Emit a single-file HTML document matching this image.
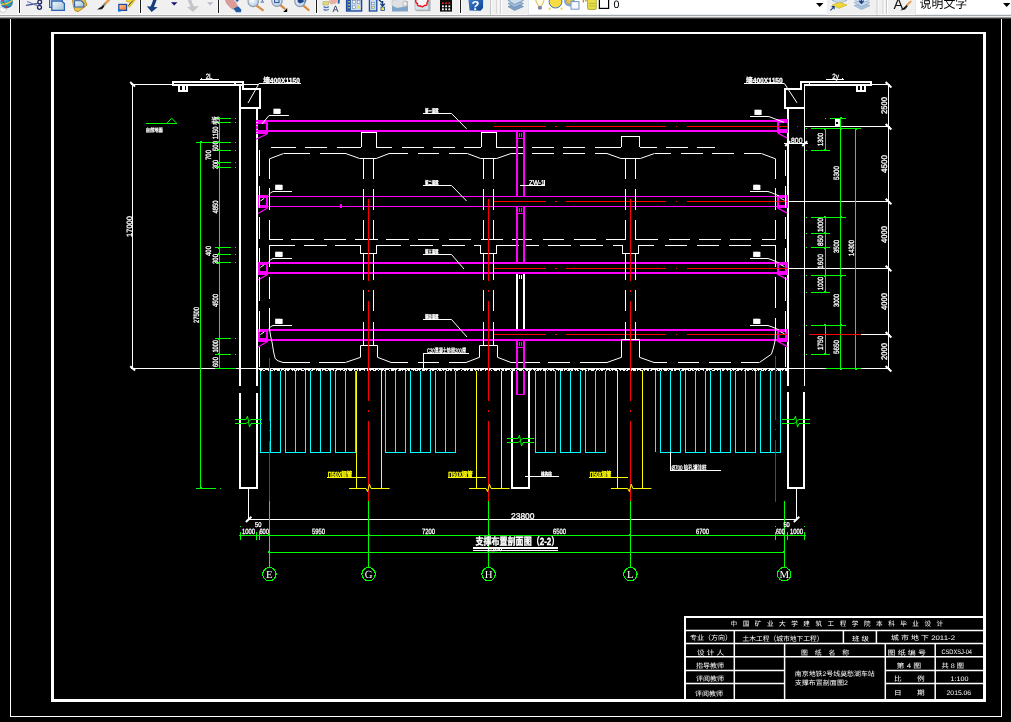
<!DOCTYPE html>
<html lang="zh"><head><meta charset="utf-8"><title>支撑布置剖面图（2-2）</title>
<style>
html,body{margin:0;padding:0;background:#000;overflow:hidden}
body{width:1011px;height:722px;position:relative;font-family:"Liberation Sans","Noto Sans CJK SC",sans-serif}
svg{position:absolute;left:0;top:0;display:block;will-change:transform}
</style></head><body>
<svg width="1011" height="722" viewBox="0 0 1011 722" shape-rendering="crispEdges" text-rendering="geometricPrecision">
<rect x="0" y="0" width="1011" height="722" fill="#000"/>
<line x1="10.5" y1="18" x2="10.5" y2="717" stroke="#fff" stroke-width="1"/>
<line x1="1001.5" y1="18" x2="1001.5" y2="717" stroke="#fff" stroke-width="1"/>
<line x1="10" y1="716.5" x2="1002" y2="716.5" stroke="#fff" stroke-width="1"/>
<rect x="51" y="32" width="3" height="670" fill="#fff"/>
<rect x="983" y="32" width="3" height="670" fill="#fff"/>
<rect x="51" y="32" width="935" height="2" fill="#fff"/>
<rect x="51" y="699" width="935" height="3" fill="#fff"/>
<line x1="685" y1="630.5" x2="984" y2="630.5" stroke="#fff" stroke-width="1.5" shape-rendering="geometricPrecision"/>
<line x1="685" y1="643.5" x2="984" y2="643.5" stroke="#fff" stroke-width="1.5" shape-rendering="geometricPrecision"/>
<line x1="685" y1="656.7" x2="984" y2="656.7" stroke="#fff" stroke-width="1.5" shape-rendering="geometricPrecision"/>
<line x1="685" y1="670.5" x2="784.6" y2="670.5" stroke="#fff" stroke-width="1.5" shape-rendering="geometricPrecision"/>
<line x1="885.3" y1="670.5" x2="984" y2="670.5" stroke="#fff" stroke-width="1.5" shape-rendering="geometricPrecision"/>
<line x1="685" y1="683.5" x2="784.6" y2="683.5" stroke="#fff" stroke-width="1.5" shape-rendering="geometricPrecision"/>
<line x1="885.3" y1="683.5" x2="984" y2="683.5" stroke="#fff" stroke-width="1.5" shape-rendering="geometricPrecision"/>
<line x1="734.3" y1="630.5" x2="734.3" y2="700" stroke="#fff" stroke-width="1.5" shape-rendering="geometricPrecision"/>
<line x1="784.6" y1="643.5" x2="784.6" y2="700" stroke="#fff" stroke-width="1.5" shape-rendering="geometricPrecision"/>
<line x1="843.4" y1="630.5" x2="843.4" y2="643.5" stroke="#fff" stroke-width="1.5" shape-rendering="geometricPrecision"/>
<line x1="876.4" y1="630.5" x2="876.4" y2="643.5" stroke="#fff" stroke-width="1.5" shape-rendering="geometricPrecision"/>
<line x1="885.3" y1="643.5" x2="885.3" y2="700" stroke="#fff" stroke-width="1.5" shape-rendering="geometricPrecision"/>
<line x1="935.2" y1="643.5" x2="935.2" y2="700" stroke="#fff" stroke-width="1.5" shape-rendering="geometricPrecision"/>
<rect x="684" y="616" width="300" height="2" fill="#fff"/>
<rect x="684" y="616" width="2" height="84" fill="#fff"/>
<g font-family="'Liberation Sans','Noto Sans CJK SC',sans-serif">
<text x="730.6" y="626.2" font-size="6.6" fill="#fff" textLength="212.6" lengthAdjust="spacing">中国矿业大学建筑工程学院本科毕业设计</text>
<text x="690" y="639.8" font-size="6.6" fill="#fff" textLength="42" lengthAdjust="spacingAndGlyphs">专业（方向）</text>
<text x="742.5" y="641.1" font-size="6.6" fill="#fff" textLength="81" lengthAdjust="spacingAndGlyphs">土木工程（城市地下工程）</text>
<text x="852" y="641.2" font-size="6.6" fill="#fff" textLength="17" lengthAdjust="spacingAndGlyphs">班 级</text>
<text x="891" y="639.8" font-size="6.6" fill="#fff" textLength="64" lengthAdjust="spacingAndGlyphs">城 市 地 下 2011-2</text>
<text x="697" y="654.5" font-size="6.6" fill="#fff" textLength="27" lengthAdjust="spacingAndGlyphs">设 计 人</text>
<text x="801" y="655.1" font-size="6.6" fill="#fff" textLength="48" lengthAdjust="spacingAndGlyphs">图　纸　名　称</text>
<text x="887.5" y="654.6" font-size="6.6" fill="#fff" textLength="38.5" lengthAdjust="spacingAndGlyphs">图 纸 编 号</text>
<text x="941.5" y="654.2" font-size="6.6" fill="#fff" textLength="30.5" lengthAdjust="spacingAndGlyphs">CSDXSJ-04</text>
<text x="696" y="668" font-size="6.6" fill="#fff" textLength="28" lengthAdjust="spacingAndGlyphs">指导教师</text>
<text x="896.6" y="668.2" font-size="6.6" fill="#fff" textLength="24.5" lengthAdjust="spacingAndGlyphs">第 4 图</text>
<text x="941.5" y="668.2" font-size="6.6" fill="#fff" textLength="22.5" lengthAdjust="spacingAndGlyphs">共 8 图</text>
<text x="696" y="681.2" font-size="6.6" fill="#fff" textLength="28" lengthAdjust="spacingAndGlyphs">评阅教师</text>
<text x="894" y="681.2" font-size="6.6" fill="#fff" textLength="30.6" lengthAdjust="spacingAndGlyphs">比　　例</text>
<text x="950.6" y="681.2" font-size="6.6" fill="#fff" textLength="18" lengthAdjust="spacingAndGlyphs">1:100</text>
<text x="695" y="696" font-size="6.6" fill="#fff" textLength="28" lengthAdjust="spacingAndGlyphs">评阅教师</text>
<text x="894" y="695.2" font-size="6.6" fill="#fff" textLength="30.6" lengthAdjust="spacingAndGlyphs">日　　期</text>
<text x="946.6" y="695.2" font-size="6.6" fill="#fff" textLength="24.5" lengthAdjust="spacingAndGlyphs">2015.06</text>
<text x="794.8" y="676.2" font-size="6.6" fill="#fff" textLength="80" lengthAdjust="spacingAndGlyphs">南京地铁2号线莫愁湖车站</text>
<text x="794.8" y="685.4" font-size="6.6" fill="#fff" textLength="53" lengthAdjust="spacingAndGlyphs">支撑布置剖面图2</text>
</g>
<g font-family="'Liberation Sans','Noto Sans CJK SC',sans-serif" class="dw">
<line x1="131" y1="84.4" x2="172.5" y2="84.4" stroke="#fff" stroke-width="1"/>
<line x1="132.7" y1="84" x2="132.7" y2="368.7" stroke="#fff" stroke-width="1"/>
<path d="M130.2 82 L135 86.6" stroke="#fff" stroke-width="2" fill="none" shape-rendering="geometricPrecision"/>
<path d="M130.2 366.3 L135.1 370.6" stroke="#fff" stroke-width="2" fill="none" shape-rendering="geometricPrecision"/>
<line x1="131" y1="368.7" x2="260" y2="368.7" stroke="#fff" stroke-width="1"/>
<rect x="172" y="81" width="72" height="2" fill="#fff"/>
<rect x="172" y="84" width="70" height="2" fill="#fff"/>
<rect x="172" y="81" width="1.6" height="5" fill="#fff"/>
<rect x="242" y="81" width="2" height="9" fill="#fff"/>
<rect x="234.2" y="83" width="1.6" height="1" fill="#fff"/>
<rect x="178.2" y="86" width="1.8" height="5.6" fill="#fff"/>
<rect x="182.4" y="86" width="2.2" height="4.6" fill="#fff"/>
<rect x="186" y="86" width="1.9" height="5.6" fill="#fff"/>
<rect x="178.2" y="90.2" width="9.7" height="1.5" fill="#fff"/>
<text x="205.8" y="78.9" font-size="7.6" fill="#fff" textLength="6.6" lengthAdjust="spacingAndGlyphs" stroke="#fff" stroke-width="0.3">2L</text>
<rect x="201.4" y="78" width="1" height="1" fill="#fff"/>
<line x1="200.3" y1="79.6" x2="219" y2="79.6" stroke="#fff" stroke-width="1"/>
<rect x="242" y="88" width="19" height="2" fill="#fff"/>
<rect x="259" y="88" width="2" height="21" fill="#fff"/>
<rect x="239" y="107" width="22" height="2" fill="#fff"/>
<line x1="244" y1="84.5" x2="258" y2="84.5" stroke="#fff" stroke-width="1"/>
<path d="M248 103 L259 83.5 L301 83.5" stroke="#fff" stroke-width="1" fill="none" shape-rendering="geometricPrecision"/>
<text x="263.2" y="82.7" font-size="7.4" fill="#fff" textLength="36.8" lengthAdjust="spacingAndGlyphs" font-weight="bold" stroke="#fff" stroke-width="0.3">墙400X1150</text>
<rect x="239" y="85.8" width="2" height="299.7" fill="#fff"/>
<rect x="256" y="107" width="2" height="278.5" fill="#fff"/>
<rect x="239" y="393" width="2" height="96" fill="#fff"/>
<rect x="256" y="393" width="2" height="96" fill="#fff"/>
<rect x="239" y="487.4" width="19" height="2" fill="#fff"/>
<line x1="248.6" y1="489" x2="248.6" y2="519.4" stroke="#fff" stroke-width="1"/>
<line x1="248" y1="519.4" x2="797" y2="519.4" stroke="#fff" stroke-width="1"/>
<path d="M245.9 522 L251.4 516.8" stroke="#fff" stroke-width="2" fill="none" shape-rendering="geometricPrecision"/>
<path d="M793.8 522 L799.3 516.8" stroke="#fff" stroke-width="2" fill="none" shape-rendering="geometricPrecision"/>
<line x1="796.5" y1="489" x2="796.5" y2="519.4" stroke="#fff" stroke-width="1"/>
<text x="511" y="519.3" font-size="8.4" fill="#fff" textLength="23.5" lengthAdjust="spacingAndGlyphs" stroke="#fff" stroke-width="0.3">23800</text>
<rect x="787" y="107" width="2" height="278.5" fill="#fff"/>
<rect x="803.9" y="84" width="1.4" height="301.5" fill="#fff"/>
<rect x="787" y="391.5" width="2" height="97.5" fill="#fff"/>
<rect x="803.4" y="391.5" width="2" height="97.5" fill="#fff"/>
<rect x="787" y="487.4" width="18.4" height="2" fill="#fff"/>
<rect x="800" y="81" width="72" height="2" fill="#fff"/>
<rect x="803.9" y="84" width="68.1" height="2" fill="#fff"/>
<rect x="800" y="81" width="2" height="9" fill="#fff"/>
<rect x="870.4" y="81" width="1.6" height="5" fill="#fff"/>
<rect x="808.9" y="83" width="1.4" height="1" fill="#fff"/>
<rect x="784" y="88" width="18" height="2" fill="#fff"/>
<rect x="784" y="88" width="2" height="21" fill="#fff"/>
<rect x="784" y="107" width="21" height="2" fill="#fff"/>
<line x1="871.9" y1="84.8" x2="890" y2="84.8" stroke="#fff" stroke-width="1"/>
<rect x="856.3" y="86" width="1.9" height="5.6" fill="#fff"/>
<rect x="859.6" y="86" width="2.2" height="4.6" fill="#fff"/>
<rect x="863.9" y="86" width="1.9" height="5.6" fill="#fff"/>
<rect x="856.3" y="90.2" width="9.5" height="1.5" fill="#fff"/>
<text x="832.2" y="78.9" font-size="7.6" fill="#fff" textLength="6.6" lengthAdjust="spacingAndGlyphs" stroke="#fff" stroke-width="0.3">2y</text>
<rect x="842.4" y="78" width="1" height="1" fill="#fff"/>
<line x1="826.2" y1="79.6" x2="844.4" y2="79.6" stroke="#fff" stroke-width="1"/>
<path d="M744 83.5 L784.4 83.5 L797 102.8" stroke="#fff" stroke-width="1" fill="none" shape-rendering="geometricPrecision"/>
<text x="746" y="82.7" font-size="7.4" fill="#fff" textLength="36.8" lengthAdjust="spacingAndGlyphs" font-weight="bold" stroke="#fff" stroke-width="0.3">墙400X1150</text>
<line x1="888.7" y1="84" x2="888.7" y2="368.7" stroke="#fff" stroke-width="1"/>
<line x1="804.6" y1="126.7" x2="889.5" y2="126.7" stroke="#fff" stroke-width="1"/>
<path d="M885.6 123.9 L891.4 129.4" stroke="#fff" stroke-width="2" fill="none" shape-rendering="geometricPrecision"/>
<line x1="804.6" y1="201.5" x2="889.5" y2="201.5" stroke="#fff" stroke-width="1"/>
<path d="M885.6 198.7 L891.4 204.2" stroke="#fff" stroke-width="2" fill="none" shape-rendering="geometricPrecision"/>
<line x1="804.6" y1="268.6" x2="889.5" y2="268.6" stroke="#fff" stroke-width="1"/>
<path d="M885.6 265.8 L891.4 271.3" stroke="#fff" stroke-width="2" fill="none" shape-rendering="geometricPrecision"/>
<line x1="861" y1="334.8" x2="889.5" y2="334.8" stroke="#fff" stroke-width="1"/>
<path d="M885.6 332 L891.4 337.5" stroke="#fff" stroke-width="2" fill="none" shape-rendering="geometricPrecision"/>
<line x1="788" y1="201.5" x2="804.6" y2="201.5" stroke="#fff" stroke-width="1"/>
<line x1="788" y1="268.6" x2="804.6" y2="268.6" stroke="#fff" stroke-width="1"/>
<path d="M885.6 82 L891.4 87.5" stroke="#fff" stroke-width="2" fill="none" shape-rendering="geometricPrecision"/>
<path d="M885.6 365.9 L891.4 371.4" stroke="#fff" stroke-width="2" fill="none" shape-rendering="geometricPrecision"/>
<line x1="788" y1="368.7" x2="826" y2="368.7" stroke="#fff" stroke-width="1"/>
<line x1="861" y1="368.7" x2="889.5" y2="368.7" stroke="#fff" stroke-width="1"/>
<line x1="826" y1="368.7" x2="861" y2="368.7" stroke="#0f0" stroke-width="1"/>
<line x1="784" y1="143.6" x2="808" y2="143.6" stroke="#fff" stroke-width="1"/>
<path d="M785.2 146 L790.2 141.2" stroke="#fff" stroke-width="2" fill="none" shape-rendering="geometricPrecision"/>
<path d="M802.2 146 L807.2 141.2" stroke="#fff" stroke-width="2" fill="none" shape-rendering="geometricPrecision"/>
<text x="791" y="143" font-size="7.6" fill="#fff" textLength="11.5" lengthAdjust="spacingAndGlyphs" stroke="#fff" stroke-width="0.3">800</text>
<text x="887.3" y="114" font-size="8" fill="#fff" transform="rotate(-90 887.3 114)" textLength="17" lengthAdjust="spacingAndGlyphs" stroke="#fff" stroke-width="0.3">2500</text>
<text x="887.3" y="173" font-size="8" fill="#fff" transform="rotate(-90 887.3 173)" textLength="18" lengthAdjust="spacingAndGlyphs" stroke="#fff" stroke-width="0.3">4500</text>
<text x="887.3" y="243" font-size="8" fill="#fff" transform="rotate(-90 887.3 243)" textLength="17" lengthAdjust="spacingAndGlyphs" stroke="#fff" stroke-width="0.3">4000</text>
<text x="887.3" y="310" font-size="8" fill="#fff" transform="rotate(-90 887.3 310)" textLength="17" lengthAdjust="spacingAndGlyphs" stroke="#fff" stroke-width="0.3">4000</text>
<text x="887.3" y="360" font-size="8" fill="#fff" transform="rotate(-90 887.3 360)" textLength="17" lengthAdjust="spacingAndGlyphs" stroke="#fff" stroke-width="0.3">2000</text>
<line x1="840.5" y1="118.4" x2="840.5" y2="368.7" stroke="#0f0" stroke-width="1"/>
<line x1="855.7" y1="128.6" x2="855.7" y2="368.7" stroke="#0f0" stroke-width="1"/>
<line x1="830" y1="118.4" x2="846" y2="118.4" stroke="#0f0" stroke-width="1"/>
<line x1="811" y1="128.6" x2="861" y2="128.6" stroke="#0f0" stroke-width="1"/>
<line x1="825.4" y1="128.6" x2="825.4" y2="150.4" stroke="#0f0" stroke-width="1"/>
<line x1="811" y1="150.4" x2="830" y2="150.4" stroke="#0f0" stroke-width="1"/>
<line x1="825.4" y1="217.4" x2="825.4" y2="292.4" stroke="#0f0" stroke-width="1"/>
<line x1="825.4" y1="325.4" x2="825.4" y2="354.4" stroke="#0f0" stroke-width="1"/>
<line x1="811" y1="217.4" x2="846" y2="217.4" stroke="#0f0" stroke-width="1"/>
<line x1="811" y1="233.4" x2="830" y2="233.4" stroke="#0f0" stroke-width="1"/>
<line x1="811" y1="247.5" x2="830" y2="247.5" stroke="#0f0" stroke-width="1"/>
<line x1="811" y1="275.6" x2="846" y2="275.6" stroke="#0f0" stroke-width="1"/>
<line x1="811" y1="292.4" x2="830" y2="292.4" stroke="#0f0" stroke-width="1"/>
<line x1="811" y1="325.4" x2="846" y2="325.4" stroke="#0f0" stroke-width="1"/>
<line x1="811" y1="354.4" x2="830" y2="354.4" stroke="#0f0" stroke-width="1"/>
<rect x="806" y="128.1" width="1" height="1" fill="#0f0"/>
<rect x="806" y="149.9" width="1" height="1" fill="#0f0"/>
<rect x="806" y="216.9" width="1" height="1" fill="#0f0"/>
<rect x="806" y="232.9" width="1" height="1" fill="#0f0"/>
<rect x="806" y="247" width="1" height="1" fill="#0f0"/>
<rect x="806" y="275.1" width="1" height="1" fill="#0f0"/>
<rect x="806" y="291.9" width="1" height="1" fill="#0f0"/>
<rect x="806" y="324.9" width="1" height="1" fill="#0f0"/>
<rect x="806" y="353.9" width="1" height="1" fill="#0f0"/>
<rect x="825" y="118" width="1" height="1" fill="#0f0"/>
<rect x="824.4" y="127.6" width="2" height="2" fill="#0f0"/>
<rect x="824.4" y="149.4" width="2" height="2" fill="#0f0"/>
<rect x="839.5" y="127.6" width="2" height="2" fill="#0f0"/>
<rect x="854.7" y="127.6" width="2" height="2" fill="#0f0"/>
<rect x="824.4" y="216.4" width="2" height="2" fill="#0f0"/>
<rect x="839.5" y="216.4" width="2" height="2" fill="#0f0"/>
<rect x="824.4" y="232.4" width="2" height="2" fill="#0f0"/>
<rect x="824.4" y="246.5" width="2" height="2" fill="#0f0"/>
<rect x="824.4" y="274.6" width="2" height="2" fill="#0f0"/>
<rect x="839.5" y="274.6" width="2" height="2" fill="#0f0"/>
<rect x="824.4" y="291.4" width="2" height="2" fill="#0f0"/>
<rect x="824.4" y="324.4" width="2" height="2" fill="#0f0"/>
<rect x="839.5" y="324.4" width="2" height="2" fill="#0f0"/>
<rect x="824.4" y="353.4" width="2" height="2" fill="#0f0"/>
<rect x="839.5" y="367.7" width="2" height="2" fill="#0f0"/>
<rect x="854.7" y="367.7" width="2" height="2" fill="#0f0"/>
<rect x="839.5" y="117.4" width="2" height="2" fill="#0f0"/>
<line x1="809" y1="334.8" x2="861" y2="334.8" stroke="#f00" stroke-width="1"/>
<rect x="798.5" y="334.7" width="1.2" height="1" fill="#f00"/>
<rect x="796.5" y="126" width="1.2" height="1" fill="#f00"/>
<rect x="834.5" y="119.3" width="5" height="6.6" fill="#fff"/>
<rect x="836" y="121.5" width="2" height="2.5" fill="#000"/>
<text x="823" y="146" font-size="7.6" fill="#fff" transform="rotate(-90 823 146)" textLength="13" lengthAdjust="spacingAndGlyphs" stroke="#fff" stroke-width="0.3">1300</text>
<text x="839" y="180" font-size="7.6" fill="#fff" transform="rotate(-90 839 180)" textLength="14" lengthAdjust="spacingAndGlyphs" stroke="#fff" stroke-width="0.3">5300</text>
<text x="823" y="232" font-size="7.6" fill="#fff" transform="rotate(-90 823 232)" textLength="14" lengthAdjust="spacingAndGlyphs" stroke="#fff" stroke-width="0.3">1000</text>
<text x="823" y="246" font-size="7.6" fill="#fff" transform="rotate(-90 823 246)" textLength="11" lengthAdjust="spacingAndGlyphs" stroke="#fff" stroke-width="0.3">850</text>
<text x="823" y="269" font-size="7.6" fill="#fff" transform="rotate(-90 823 269)" textLength="15" lengthAdjust="spacingAndGlyphs" stroke="#fff" stroke-width="0.3">1600</text>
<text x="823" y="290" font-size="7.6" fill="#fff" transform="rotate(-90 823 290)" textLength="13" lengthAdjust="spacingAndGlyphs" stroke="#fff" stroke-width="0.3">1000</text>
<text x="839" y="253" font-size="7.6" fill="#fff" transform="rotate(-90 839 253)" textLength="13" lengthAdjust="spacingAndGlyphs" stroke="#fff" stroke-width="0.3">3500</text>
<text x="854" y="256" font-size="7.6" fill="#fff" transform="rotate(-90 854 256)" textLength="16" lengthAdjust="spacingAndGlyphs" stroke="#fff" stroke-width="0.3">14300</text>
<text x="839" y="307" font-size="7.6" fill="#fff" transform="rotate(-90 839 307)" textLength="13" lengthAdjust="spacingAndGlyphs" stroke="#fff" stroke-width="0.3">3000</text>
<text x="823" y="350" font-size="7.6" fill="#fff" transform="rotate(-90 823 350)" textLength="14" lengthAdjust="spacingAndGlyphs" stroke="#fff" stroke-width="0.3">1750</text>
<text x="839" y="354" font-size="7.6" fill="#fff" transform="rotate(-90 839 354)" textLength="14" lengthAdjust="spacingAndGlyphs" stroke="#fff" stroke-width="0.3">5650</text>
<line x1="219.5" y1="118.4" x2="219.5" y2="368.7" stroke="#0f0" stroke-width="1"/>
<line x1="200.5" y1="142.1" x2="200.5" y2="488.4" stroke="#0f0" stroke-width="1"/>
<line x1="196" y1="142.1" x2="231" y2="142.1" stroke="#0f0" stroke-width="1"/>
<line x1="215" y1="118.4" x2="231" y2="118.4" stroke="#0f0" stroke-width="1"/>
<line x1="215" y1="122.7" x2="231" y2="122.7" stroke="#0f0" stroke-width="1"/>
<line x1="215" y1="150.4" x2="231" y2="150.4" stroke="#0f0" stroke-width="1"/>
<line x1="215" y1="162.5" x2="231" y2="162.5" stroke="#0f0" stroke-width="1"/>
<line x1="215" y1="167.4" x2="231" y2="167.4" stroke="#0f0" stroke-width="1"/>
<line x1="215" y1="247.5" x2="231" y2="247.5" stroke="#0f0" stroke-width="1"/>
<line x1="215" y1="254.4" x2="231" y2="254.4" stroke="#0f0" stroke-width="1"/>
<line x1="215" y1="262.5" x2="231" y2="262.5" stroke="#0f0" stroke-width="1"/>
<line x1="215" y1="338.5" x2="231" y2="338.5" stroke="#0f0" stroke-width="1"/>
<line x1="215" y1="354.4" x2="231" y2="354.4" stroke="#0f0" stroke-width="1"/>
<line x1="215" y1="368.7" x2="236" y2="368.7" stroke="#0f0" stroke-width="1"/>
<rect x="235" y="117.9" width="1" height="1" fill="#0f0"/>
<rect x="217.8" y="117.4" width="2" height="2" fill="#0f0"/>
<rect x="235" y="122.2" width="1" height="1" fill="#0f0"/>
<rect x="217.8" y="121.7" width="2" height="2" fill="#0f0"/>
<rect x="235" y="141.6" width="1" height="1" fill="#0f0"/>
<rect x="217.8" y="141.1" width="2" height="2" fill="#0f0"/>
<rect x="235" y="149.9" width="1" height="1" fill="#0f0"/>
<rect x="217.8" y="149.4" width="2" height="2" fill="#0f0"/>
<rect x="235" y="162" width="1" height="1" fill="#0f0"/>
<rect x="217.8" y="161.5" width="2" height="2" fill="#0f0"/>
<rect x="235" y="166.9" width="1" height="1" fill="#0f0"/>
<rect x="217.8" y="166.4" width="2" height="2" fill="#0f0"/>
<rect x="235" y="247" width="1" height="1" fill="#0f0"/>
<rect x="217.8" y="246.5" width="2" height="2" fill="#0f0"/>
<rect x="235" y="253.9" width="1" height="1" fill="#0f0"/>
<rect x="217.8" y="253.4" width="2" height="2" fill="#0f0"/>
<rect x="235" y="262" width="1" height="1" fill="#0f0"/>
<rect x="217.8" y="261.5" width="2" height="2" fill="#0f0"/>
<rect x="235" y="338" width="1" height="1" fill="#0f0"/>
<rect x="217.8" y="337.5" width="2" height="2" fill="#0f0"/>
<rect x="235" y="353.9" width="1" height="1" fill="#0f0"/>
<rect x="217.8" y="353.4" width="2" height="2" fill="#0f0"/>
<rect x="199.5" y="141.1" width="2" height="2" fill="#0f0"/>
<line x1="196" y1="488.4" x2="216" y2="488.4" stroke="#0f0" stroke-width="1"/>
<rect x="199.5" y="487.4" width="2" height="2" fill="#0f0"/>
<rect x="220" y="487.9" width="1" height="1" fill="#0f0"/>
<text x="217.8" y="124.4" font-size="7.6" fill="#fff" transform="rotate(-90 217.8 124.4)" textLength="8" lengthAdjust="spacingAndGlyphs" stroke="#fff" stroke-width="0.3">楼板</text>
<text x="217.8" y="139.2" font-size="7.6" fill="#fff" transform="rotate(-90 217.8 139.2)" textLength="12.9" lengthAdjust="spacingAndGlyphs" stroke="#fff" stroke-width="0.3">1150</text>
<text x="217.8" y="151" font-size="7.6" fill="#fff" transform="rotate(-90 217.8 151)" textLength="10" lengthAdjust="spacingAndGlyphs" stroke="#fff" stroke-width="0.3">500</text>
<text x="211" y="160" font-size="7.6" fill="#fff" transform="rotate(-90 211 160)" textLength="10" lengthAdjust="spacingAndGlyphs" stroke="#fff" stroke-width="0.3">700</text>
<text x="217.8" y="169" font-size="7.6" fill="#fff" transform="rotate(-90 217.8 169)" textLength="9" lengthAdjust="spacingAndGlyphs" stroke="#fff" stroke-width="0.3">300</text>
<text x="217.8" y="213.6" font-size="7.6" fill="#fff" transform="rotate(-90 217.8 213.6)" textLength="13.1" lengthAdjust="spacingAndGlyphs" stroke="#fff" stroke-width="0.3">4850</text>
<text x="211" y="256" font-size="7.6" fill="#fff" transform="rotate(-90 211 256)" textLength="10" lengthAdjust="spacingAndGlyphs" stroke="#fff" stroke-width="0.3">400</text>
<text x="217.8" y="264" font-size="7.6" fill="#fff" transform="rotate(-90 217.8 264)" textLength="10" lengthAdjust="spacingAndGlyphs" stroke="#fff" stroke-width="0.3">300</text>
<text x="217.8" y="307" font-size="7.6" fill="#fff" transform="rotate(-90 217.8 307)" textLength="13" lengthAdjust="spacingAndGlyphs" stroke="#fff" stroke-width="0.3">4500</text>
<text x="217.8" y="352.5" font-size="7.6" fill="#fff" transform="rotate(-90 217.8 352.5)" textLength="12.5" lengthAdjust="spacingAndGlyphs" stroke="#fff" stroke-width="0.3">1000</text>
<text x="217.8" y="367" font-size="7.6" fill="#fff" transform="rotate(-90 217.8 367)" textLength="10" lengthAdjust="spacingAndGlyphs" stroke="#fff" stroke-width="0.3">600</text>
<text x="199" y="323" font-size="7.6" fill="#fff" transform="rotate(-90 199 323)" textLength="16" lengthAdjust="spacingAndGlyphs" stroke="#fff" stroke-width="0.3">27500</text>
<text x="132" y="237" font-size="7.6" fill="#fff" transform="rotate(-90 132 237)" textLength="21" lengthAdjust="spacingAndGlyphs" stroke="#fff" stroke-width="0.3">17000</text>
<line x1="146" y1="123.3" x2="177" y2="123.3" stroke="#0f0" stroke-width="1"/>
<path d="M166.9 123.3 L171.6 118.2 L176.8 123.3" stroke="#0f0" stroke-width="1" fill="none" shape-rendering="geometricPrecision"/>
<text x="145.7" y="131.6" font-size="5.4" fill="#fff" textLength="17" lengthAdjust="spacingAndGlyphs" stroke="#fff" stroke-width="0.3">自然地面</text>
<line x1="258" y1="121" x2="787" y2="121" stroke="#f0f" stroke-width="2.2"/>
<line x1="258" y1="131" x2="787" y2="131" stroke="#f0f" stroke-width="2.2"/>
<line x1="258" y1="196.6" x2="787" y2="196.6" stroke="#f0f" stroke-width="1.1"/>
<line x1="258" y1="206.5" x2="787" y2="206.5" stroke="#f0f" stroke-width="1.1"/>
<line x1="258" y1="263" x2="787" y2="263" stroke="#f0f" stroke-width="2.2"/>
<line x1="258" y1="272.9" x2="787" y2="272.9" stroke="#f0f" stroke-width="2.2"/>
<line x1="258" y1="330.2" x2="787" y2="330.2" stroke="#f0f" stroke-width="2.2"/>
<line x1="258" y1="339.9" x2="787" y2="339.9" stroke="#f0f" stroke-width="2.2"/>
<rect x="256" y="119.9" width="12" height="14.1" fill="#f0f"/>
<rect x="258.2" y="123.8" width="7.3" height="5.9" fill="#000"/>
<path d="M267.5 133.7 L256 139.2" stroke="#f0f" stroke-width="1.2" fill="none" shape-rendering="geometricPrecision"/>
<rect x="256.3" y="121.6" width="1.2" height="1" fill="#fbf"/>
<rect x="256.3" y="125.2" width="1.2" height="1" fill="#fbf"/>
<rect x="256.3" y="128.8" width="1.2" height="1" fill="#fbf"/>
<rect x="256.3" y="132.2" width="1.2" height="1" fill="#fbf"/>
<rect x="777.1" y="119.1" width="10.7" height="14.3" fill="#f0f"/>
<rect x="779" y="122.9" width="7.9" height="6.2" fill="#000"/>
<path d="M777.9 133.1 L787.4 138.2" stroke="#f0f" stroke-width="1.2" fill="none" shape-rendering="geometricPrecision"/>
<rect x="258" y="195" width="10" height="13.4" fill="#f0f"/>
<rect x="260" y="198.2" width="5.5" height="6.3" fill="#000"/>
<path d="M267.5 208.1 L258 213.6" stroke="#f0f" stroke-width="1.2" fill="none" shape-rendering="geometricPrecision"/>
<rect x="777.1" y="195" width="10.7" height="13.4" fill="#f0f"/>
<rect x="779" y="198.2" width="6.2" height="6.3" fill="#000"/>
<path d="M777.9 208.1 L787.4 213.2" stroke="#f0f" stroke-width="1.2" fill="none" shape-rendering="geometricPrecision"/>
<rect x="258" y="261.9" width="10" height="12.9" fill="#f0f"/>
<rect x="260" y="264.6" width="5.5" height="6.3" fill="#000"/>
<path d="M267.5 274.5 L258 280" stroke="#f0f" stroke-width="1.2" fill="none" shape-rendering="geometricPrecision"/>
<rect x="777.1" y="261.9" width="10.7" height="12.9" fill="#f0f"/>
<rect x="779" y="264.6" width="6.2" height="6.3" fill="#000"/>
<path d="M777.9 274.5 L787.4 279.6" stroke="#f0f" stroke-width="1.2" fill="none" shape-rendering="geometricPrecision"/>
<rect x="258" y="329.1" width="10" height="12.7" fill="#f0f"/>
<rect x="260" y="331.8" width="5.5" height="6.1" fill="#000"/>
<path d="M267.5 341.5 L258 347" stroke="#f0f" stroke-width="1.2" fill="none" shape-rendering="geometricPrecision"/>
<rect x="777.1" y="329.1" width="10.7" height="12.7" fill="#f0f"/>
<rect x="779" y="331.8" width="6.2" height="6.1" fill="#000"/>
<path d="M777.9 341.5 L787.4 346.6" stroke="#f0f" stroke-width="1.2" fill="none" shape-rendering="geometricPrecision"/>
<line x1="493.5" y1="126.4" x2="787" y2="126.4" stroke="#f00" stroke-width="1.1" stroke-dasharray="52 9.5 1.6 9.5 100 9.5 1.6 9.5 200"/>
<line x1="493.5" y1="201.5" x2="787" y2="201.5" stroke="#f00" stroke-width="1.1" stroke-dasharray="52 9.5 1.6 9.5 100 9.5 1.6 9.5 200"/>
<line x1="493.5" y1="268.6" x2="787" y2="268.6" stroke="#f00" stroke-width="1.1" stroke-dasharray="52 9.5 1.6 9.5 100 9.5 1.6 9.5 200"/>
<line x1="493.5" y1="334.6" x2="787" y2="334.6" stroke="#f00" stroke-width="1.1" stroke-dasharray="52 9.5 1.6 9.5 100 9.5 1.6 9.5 200"/>
<line x1="259.6" y1="149.8" x2="259.6" y2="176" stroke="#fff" stroke-width="1"/>
<line x1="259.6" y1="186" x2="259.6" y2="208" stroke="#fff" stroke-width="1"/>
<line x1="259.6" y1="216.7" x2="259.6" y2="239" stroke="#fff" stroke-width="1"/>
<line x1="259.6" y1="247.7" x2="259.6" y2="262" stroke="#fff" stroke-width="1"/>
<line x1="259.6" y1="276.5" x2="259.6" y2="301.2" stroke="#fff" stroke-width="1"/>
<line x1="259.6" y1="310.8" x2="259.6" y2="332" stroke="#fff" stroke-width="1"/>
<line x1="259.6" y1="347.4" x2="259.6" y2="366.5" stroke="#fff" stroke-width="1"/>
<line x1="785.9" y1="149.8" x2="785.9" y2="176" stroke="#fff" stroke-width="1"/>
<line x1="785.9" y1="186" x2="785.9" y2="208" stroke="#fff" stroke-width="1"/>
<line x1="785.9" y1="216.7" x2="785.9" y2="239" stroke="#fff" stroke-width="1"/>
<line x1="785.9" y1="247.7" x2="785.9" y2="262" stroke="#fff" stroke-width="1"/>
<line x1="785.9" y1="276.5" x2="785.9" y2="301.2" stroke="#fff" stroke-width="1"/>
<line x1="785.9" y1="310.8" x2="785.9" y2="332" stroke="#fff" stroke-width="1"/>
<line x1="785.9" y1="347.4" x2="785.9" y2="366.5" stroke="#fff" stroke-width="1"/>
<line x1="271" y1="147.4" x2="295.7" y2="147.4" stroke="#fff" stroke-width="1"/>
<line x1="305" y1="147.4" x2="326.8" y2="147.4" stroke="#fff" stroke-width="1"/>
<line x1="336.8" y1="147.4" x2="361" y2="147.4" stroke="#fff" stroke-width="1"/>
<line x1="376.2" y1="147.4" x2="391.6" y2="147.4" stroke="#fff" stroke-width="1"/>
<line x1="402" y1="147.4" x2="424" y2="147.4" stroke="#fff" stroke-width="1"/>
<line x1="433.2" y1="147.4" x2="455.2" y2="147.4" stroke="#fff" stroke-width="1"/>
<line x1="464.4" y1="147.4" x2="481" y2="147.4" stroke="#fff" stroke-width="1"/>
<line x1="496.2" y1="147.4" x2="523" y2="147.4" stroke="#fff" stroke-width="1"/>
<line x1="532.3" y1="147.4" x2="554" y2="147.4" stroke="#fff" stroke-width="1"/>
<line x1="563.1" y1="147.4" x2="584.9" y2="147.4" stroke="#fff" stroke-width="1"/>
<line x1="595.2" y1="147.4" x2="621.3" y2="147.4" stroke="#fff" stroke-width="1"/>
<line x1="639.5" y1="147.4" x2="657" y2="147.4" stroke="#fff" stroke-width="1"/>
<line x1="666.4" y1="147.4" x2="688" y2="147.4" stroke="#fff" stroke-width="1"/>
<line x1="697.4" y1="147.4" x2="715.4" y2="147.4" stroke="#fff" stroke-width="1"/>
<path d="M361 147.4 L361 132.6 L376.2 132.6 L376.2 147.4" stroke="#fff" stroke-width="1" fill="none"/>
<path d="M481 147.4 L481 132.6 L496.2 132.6 L496.2 147.4" stroke="#fff" stroke-width="1" fill="none"/>
<path d="M621.3 147.4 L621.3 136.2 L639.5 136.2 L639.5 147.4" stroke="#fff" stroke-width="1" fill="none"/>
<path d="M269.5 178.6 L269.5 158.8 L283.6 153.5" stroke="#fff" stroke-width="1" fill="none" shape-rendering="geometricPrecision"/>
<path d="M775.5 178.6 L775.5 158.8 L761.3 153.5" stroke="#fff" stroke-width="1" fill="none" shape-rendering="geometricPrecision"/>
<path d="M345.7 153.5 L359.6 158.5 L376.2 158.5 L389.2 153.5" stroke="#fff" stroke-width="1" fill="none" shape-rendering="geometricPrecision"/>
<path d="M467.4 153.5 L480.6 158.5 L496.7 158.5 L510.9 153.5" stroke="#fff" stroke-width="1" fill="none" shape-rendering="geometricPrecision"/>
<path d="M607 153.5 L620.9 158.5 L640.3 158.5 L654.5 153.5" stroke="#fff" stroke-width="1" fill="none" shape-rendering="geometricPrecision"/>
<line x1="283.6" y1="153.5" x2="310" y2="153.5" stroke="#fff" stroke-width="1"/>
<line x1="320.2" y1="153.5" x2="345.7" y2="153.5" stroke="#fff" stroke-width="1"/>
<line x1="389.2" y1="153.5" x2="407.7" y2="153.5" stroke="#fff" stroke-width="1"/>
<line x1="418.3" y1="153.5" x2="438.7" y2="153.5" stroke="#fff" stroke-width="1"/>
<line x1="449.2" y1="153.5" x2="467.4" y2="153.5" stroke="#fff" stroke-width="1"/>
<line x1="510.9" y1="153.5" x2="523" y2="153.5" stroke="#fff" stroke-width="1"/>
<line x1="532.3" y1="153.5" x2="554" y2="153.5" stroke="#fff" stroke-width="1"/>
<line x1="563.1" y1="153.5" x2="584.9" y2="153.5" stroke="#fff" stroke-width="1"/>
<line x1="595.2" y1="153.5" x2="607" y2="153.5" stroke="#fff" stroke-width="1"/>
<line x1="654.5" y1="153.5" x2="671.3" y2="153.5" stroke="#fff" stroke-width="1"/>
<line x1="681.3" y1="153.5" x2="703" y2="153.5" stroke="#fff" stroke-width="1"/>
<line x1="712.4" y1="153.5" x2="734" y2="153.5" stroke="#fff" stroke-width="1"/>
<line x1="743.5" y1="153.5" x2="761.3" y2="153.5" stroke="#fff" stroke-width="1"/>
<line x1="269.4" y1="158.5" x2="269.4" y2="178.8" stroke="#fff" stroke-width="1"/>
<line x1="269.4" y1="188" x2="269.4" y2="209.5" stroke="#fff" stroke-width="1"/>
<line x1="269.4" y1="219.9" x2="269.4" y2="239.5" stroke="#fff" stroke-width="1"/>
<line x1="269.4" y1="245.4" x2="269.4" y2="266.7" stroke="#fff" stroke-width="1"/>
<line x1="269.4" y1="276.5" x2="269.4" y2="298.8" stroke="#fff" stroke-width="1"/>
<line x1="269.4" y1="308.4" x2="269.4" y2="330" stroke="#fff" stroke-width="1"/>
<line x1="775.4" y1="158.5" x2="775.4" y2="178.8" stroke="#fff" stroke-width="1"/>
<line x1="775.4" y1="188" x2="775.4" y2="209.5" stroke="#fff" stroke-width="1"/>
<line x1="775.4" y1="219.9" x2="775.4" y2="239.5" stroke="#fff" stroke-width="1"/>
<line x1="775.4" y1="245.4" x2="775.4" y2="266.7" stroke="#fff" stroke-width="1"/>
<line x1="775.4" y1="276.5" x2="775.4" y2="307.6" stroke="#fff" stroke-width="1"/>
<line x1="775.4" y1="318" x2="775.4" y2="330" stroke="#fff" stroke-width="1"/>
<line x1="363.55" y1="158.3" x2="363.55" y2="239.5" stroke="#fff" stroke-width="1" stroke-dasharray="20.4 10.4 20.4 10.8 19.5 1"/>
<line x1="363.55" y1="253.4" x2="363.55" y2="345.5" stroke="#fff" stroke-width="1" stroke-dasharray="26.6 10 20.8 10.8 24 1"/>
<line x1="373.65" y1="158.3" x2="373.65" y2="239.5" stroke="#fff" stroke-width="1" stroke-dasharray="20.4 10.4 20.4 10.8 19.5 1"/>
<line x1="373.65" y1="253.4" x2="373.65" y2="345.5" stroke="#fff" stroke-width="1" stroke-dasharray="26.6 10 20.8 10.8 24 1"/>
<line x1="483.55" y1="158.3" x2="483.55" y2="239.5" stroke="#fff" stroke-width="1" stroke-dasharray="20.4 10.4 20.4 10.8 19.5 1"/>
<line x1="483.55" y1="253.4" x2="483.55" y2="345.5" stroke="#fff" stroke-width="1" stroke-dasharray="26.6 10 20.8 10.8 24 1"/>
<line x1="493.65" y1="158.3" x2="493.65" y2="239.5" stroke="#fff" stroke-width="1" stroke-dasharray="20.4 10.4 20.4 10.8 19.5 1"/>
<line x1="493.65" y1="253.4" x2="493.65" y2="345.5" stroke="#fff" stroke-width="1" stroke-dasharray="26.6 10 20.8 10.8 24 1"/>
<line x1="625.35" y1="158.3" x2="625.35" y2="239.5" stroke="#fff" stroke-width="1" stroke-dasharray="20.4 10.4 20.4 10.8 19.5 1"/>
<line x1="625.35" y1="253.4" x2="625.35" y2="339.6" stroke="#fff" stroke-width="1" stroke-dasharray="26.6 10 20.8 10.8 24 1"/>
<line x1="635.45" y1="158.3" x2="635.45" y2="239.5" stroke="#fff" stroke-width="1" stroke-dasharray="20.4 10.4 20.4 10.8 19.5 1"/>
<line x1="635.45" y1="253.4" x2="635.45" y2="339.6" stroke="#fff" stroke-width="1" stroke-dasharray="26.6 10 20.8 10.8 24 1"/>
<line x1="269.4" y1="239.5" x2="282.5" y2="239.5" stroke="#fff" stroke-width="1"/>
<line x1="291" y1="239.5" x2="313.8" y2="239.5" stroke="#fff" stroke-width="1"/>
<line x1="323.9" y1="239.5" x2="345.8" y2="239.5" stroke="#fff" stroke-width="1"/>
<line x1="355.2" y1="239.5" x2="377.9" y2="239.5" stroke="#fff" stroke-width="1"/>
<line x1="385.9" y1="239.5" x2="408.6" y2="239.5" stroke="#fff" stroke-width="1"/>
<line x1="418" y1="239.5" x2="439.3" y2="239.5" stroke="#fff" stroke-width="1"/>
<line x1="448.6" y1="239.5" x2="471.3" y2="239.5" stroke="#fff" stroke-width="1"/>
<line x1="480.7" y1="239.5" x2="503.4" y2="239.5" stroke="#fff" stroke-width="1"/>
<line x1="512" y1="239.5" x2="532.4" y2="239.5" stroke="#fff" stroke-width="1"/>
<line x1="543" y1="239.5" x2="564.4" y2="239.5" stroke="#fff" stroke-width="1"/>
<line x1="574.3" y1="239.5" x2="596" y2="239.5" stroke="#fff" stroke-width="1"/>
<line x1="605.8" y1="239.5" x2="625.8" y2="239.5" stroke="#fff" stroke-width="1"/>
<line x1="635.2" y1="239.5" x2="657.9" y2="239.5" stroke="#fff" stroke-width="1"/>
<line x1="668.6" y1="239.5" x2="690" y2="239.5" stroke="#fff" stroke-width="1"/>
<line x1="699.3" y1="239.5" x2="720.7" y2="239.5" stroke="#fff" stroke-width="1"/>
<line x1="730" y1="239.5" x2="751.4" y2="239.5" stroke="#fff" stroke-width="1"/>
<line x1="762" y1="239.5" x2="776" y2="239.5" stroke="#fff" stroke-width="1"/>
<line x1="269.4" y1="245.4" x2="295" y2="245.4" stroke="#fff" stroke-width="1"/>
<line x1="304.4" y1="245.4" x2="326.6" y2="245.4" stroke="#fff" stroke-width="1"/>
<line x1="335.1" y1="245.4" x2="360.9" y2="245.4" stroke="#fff" stroke-width="1"/>
<line x1="376.3" y1="245.4" x2="400.6" y2="245.4" stroke="#fff" stroke-width="1"/>
<line x1="410" y1="245.4" x2="432.6" y2="245.4" stroke="#fff" stroke-width="1"/>
<line x1="442" y1="245.4" x2="464.7" y2="245.4" stroke="#fff" stroke-width="1"/>
<line x1="474" y1="245.4" x2="480.9" y2="245.4" stroke="#fff" stroke-width="1"/>
<line x1="496.3" y1="245.4" x2="519.4" y2="245.4" stroke="#fff" stroke-width="1"/>
<line x1="526" y1="245.4" x2="539" y2="245.4" stroke="#fff" stroke-width="1"/>
<line x1="548.4" y1="245.4" x2="571" y2="245.4" stroke="#fff" stroke-width="1"/>
<line x1="580.4" y1="245.4" x2="603" y2="245.4" stroke="#fff" stroke-width="1"/>
<line x1="612.5" y1="245.4" x2="622.7" y2="245.4" stroke="#fff" stroke-width="1"/>
<line x1="638.1" y1="245.4" x2="654.4" y2="245.4" stroke="#fff" stroke-width="1"/>
<line x1="664.6" y1="245.4" x2="687.3" y2="245.4" stroke="#fff" stroke-width="1"/>
<line x1="696.6" y1="245.4" x2="719.3" y2="245.4" stroke="#fff" stroke-width="1"/>
<line x1="728.7" y1="245.4" x2="751.4" y2="245.4" stroke="#fff" stroke-width="1"/>
<line x1="760.7" y1="245.4" x2="776" y2="245.4" stroke="#fff" stroke-width="1"/>
<path d="M360.9 245.4 L360.9 253.4 L376.3 253.4 L376.3 245.4" stroke="#fff" stroke-width="1" fill="none"/>
<path d="M480.9 245.4 L480.9 253.4 L496.3 253.4 L496.3 245.4" stroke="#fff" stroke-width="1" fill="none"/>
<path d="M622.7 245.4 L622.7 253.4 L638.1 253.4 L638.1 245.4" stroke="#fff" stroke-width="1" fill="none"/>
<path d="M269.5 329 L270.6 336 L272.2 343 L273.6 352 L275.2 358.6 L278 360.8 L283 362.5" stroke="#fff" stroke-width="1" fill="none" shape-rendering="geometricPrecision"/>
<path d="M775.5 329 L775.2 340 L773.4 348 L771.4 354.2 L759.4 362.5" stroke="#fff" stroke-width="1" fill="none" shape-rendering="geometricPrecision"/>
<line x1="283" y1="362.5" x2="309.7" y2="362.5" stroke="#fff" stroke-width="1"/>
<line x1="319" y1="362.5" x2="345.3" y2="362.5" stroke="#fff" stroke-width="1"/>
<line x1="391.2" y1="362.5" x2="408" y2="362.5" stroke="#fff" stroke-width="1"/>
<line x1="418" y1="362.5" x2="439.3" y2="362.5" stroke="#fff" stroke-width="1"/>
<line x1="448.6" y1="362.5" x2="466" y2="362.5" stroke="#fff" stroke-width="1"/>
<line x1="511" y1="362.5" x2="540.4" y2="362.5" stroke="#fff" stroke-width="1"/>
<line x1="548.4" y1="362.5" x2="569.8" y2="362.5" stroke="#fff" stroke-width="1"/>
<line x1="580.4" y1="362.5" x2="607" y2="362.5" stroke="#fff" stroke-width="1"/>
<line x1="654" y1="362.5" x2="667" y2="362.5" stroke="#fff" stroke-width="1"/>
<line x1="678" y1="362.5" x2="699.3" y2="362.5" stroke="#fff" stroke-width="1"/>
<line x1="708.6" y1="362.5" x2="731.3" y2="362.5" stroke="#fff" stroke-width="1"/>
<line x1="740.7" y1="362.5" x2="759.4" y2="362.5" stroke="#fff" stroke-width="1"/>
<path d="M345.3 362.5 L360.5 357.3 L360.5 345.5 L377.5 345.5 L377.5 357.3 L391.2 362.5" stroke="#fff" stroke-width="1" fill="none" shape-rendering="geometricPrecision"/>
<path d="M466 362.5 L479.5 357.3 L479.5 345.5 L497.5 345.5 L497.5 357.3 L511 362.5" stroke="#fff" stroke-width="1" fill="none" shape-rendering="geometricPrecision"/>
<path d="M607 362.5 L621.5 357.3 L621.5 339.5 L639.5 339.5 L639.5 357.3 L654 362.5" stroke="#fff" stroke-width="1" fill="none" shape-rendering="geometricPrecision"/>
<line x1="517" y1="132" x2="517" y2="196" stroke="#f0f" stroke-width="2"/>
<line x1="517" y1="207" x2="517" y2="262" stroke="#f0f" stroke-width="2"/>
<line x1="517" y1="274" x2="517" y2="329" stroke="#fff" stroke-width="2"/>
<line x1="517" y1="341" x2="517" y2="394.8" stroke="#f0f" stroke-width="2"/>
<line x1="524" y1="132" x2="524" y2="196" stroke="#f0f" stroke-width="2"/>
<line x1="524" y1="207" x2="524" y2="262" stroke="#f0f" stroke-width="2"/>
<line x1="524" y1="274" x2="524" y2="329" stroke="#fff" stroke-width="2"/>
<line x1="524" y1="341" x2="524" y2="394.8" stroke="#f0f" stroke-width="2"/>
<line x1="516" y1="394.3" x2="525" y2="394.3" stroke="#f0f" stroke-width="1.4"/>
<rect x="518.8" y="132.5" width="1.2" height="4.5" fill="#f0f"/>
<rect x="521.2" y="132.5" width="1.2" height="4.5" fill="#f0f"/>
<rect x="518.8" y="207.5" width="1.2" height="4.5" fill="#f0f"/>
<rect x="521.2" y="207.5" width="1.2" height="4.5" fill="#f0f"/>
<rect x="518.8" y="274.5" width="1.2" height="4.5" fill="#fff"/>
<rect x="521.2" y="274.5" width="1.2" height="4.5" fill="#fff"/>
<rect x="518.8" y="341.5" width="1.2" height="4.5" fill="#f0f"/>
<rect x="521.2" y="341.5" width="1.2" height="4.5" fill="#f0f"/>
<line x1="517" y1="138.5" x2="524" y2="138.5" stroke="#f0f" stroke-width="1"/>
<line x1="517" y1="213" x2="524" y2="213" stroke="#f0f" stroke-width="1"/>
<line x1="517" y1="347" x2="524" y2="347" stroke="#f0f" stroke-width="1"/>
<line x1="520" y1="185.6" x2="545" y2="185.6" stroke="#fff" stroke-width="1"/>
<text x="529" y="185.2" font-size="7.2" fill="#fff" textLength="15.5" lengthAdjust="spacingAndGlyphs" stroke="#fff" stroke-width="0.3">ZW-1</text>
<line x1="544.8" y1="180" x2="544.8" y2="186" stroke="#fff" stroke-width="1"/>
<rect x="340.4" y="204" width="1.4" height="4.4" fill="#f0f"/>
<path d="M423 113.5 L451.5 113.5 L466.6 128.8" stroke="#fff" stroke-width="1" fill="none" shape-rendering="geometricPrecision"/>
<text x="425" y="112.5" font-size="5.8" fill="#fff" textLength="13.5" lengthAdjust="spacingAndGlyphs" font-weight="bold" stroke="#fff" stroke-width="0.3">第一道撑</text>
<path d="M423 185.5 L451.5 185.5 L466.6 201" stroke="#fff" stroke-width="1" fill="none" shape-rendering="geometricPrecision"/>
<text x="425" y="184.5" font-size="5.8" fill="#fff" textLength="13.5" lengthAdjust="spacingAndGlyphs" font-weight="bold" stroke="#fff" stroke-width="0.3">第二道撑</text>
<path d="M423 254.5 L451.5 254.5 L464 269" stroke="#fff" stroke-width="1" fill="none" shape-rendering="geometricPrecision"/>
<text x="425" y="253.5" font-size="5.8" fill="#fff" textLength="13.5" lengthAdjust="spacingAndGlyphs" font-weight="bold" stroke="#fff" stroke-width="0.3">第三道撑</text>
<path d="M423 319.5 L451.5 319.5 L467 337" stroke="#fff" stroke-width="1" fill="none" shape-rendering="geometricPrecision"/>
<text x="425" y="318.5" font-size="5.8" fill="#fff" textLength="13.5" lengthAdjust="spacingAndGlyphs" font-weight="bold" stroke="#fff" stroke-width="0.3">第四道撑</text>
<path d="M288.9 115.5 L269 115.5 L262 123.9" stroke="#fff" stroke-width="1" fill="none" shape-rendering="geometricPrecision"/>
<text x="273.8" y="113" font-size="4.3" fill="#fff" textLength="6.6" lengthAdjust="spacingAndGlyphs" font-weight="bold" stroke="#fff" stroke-width="1.3">围檩</text>
<path d="M292 191.5 L273 191.5 L270.6 192.7 L268.9 194.5" stroke="#fff" stroke-width="1" fill="none" shape-rendering="geometricPrecision"/>
<path d="M264.2 198.4 L260.4 201" stroke="#fff" stroke-width="1" fill="none" shape-rendering="geometricPrecision"/>
<text x="275.6" y="189.1" font-size="4.3" fill="#fff" textLength="6.6" lengthAdjust="spacingAndGlyphs" font-weight="bold" stroke="#fff" stroke-width="1.3">围檩</text>
<path d="M292 258.5 L273 258.5 L270.6 259.7 L268.9 261.5" stroke="#fff" stroke-width="1" fill="none" shape-rendering="geometricPrecision"/>
<path d="M264.2 264.8 L260.4 267.4" stroke="#fff" stroke-width="1" fill="none" shape-rendering="geometricPrecision"/>
<text x="275.6" y="256.1" font-size="4.3" fill="#fff" textLength="6.6" lengthAdjust="spacingAndGlyphs" font-weight="bold" stroke="#fff" stroke-width="1.3">围檩</text>
<path d="M292 325.5 L273 325.5 L270.6 326.7 L268.9 328.5" stroke="#fff" stroke-width="1" fill="none" shape-rendering="geometricPrecision"/>
<path d="M264.2 332 L260.4 334.6" stroke="#fff" stroke-width="1" fill="none" shape-rendering="geometricPrecision"/>
<text x="275.6" y="323.1" font-size="4.3" fill="#fff" textLength="6.6" lengthAdjust="spacingAndGlyphs" font-weight="bold" stroke="#fff" stroke-width="1.3">围檩</text>
<path d="M750 116.5 L768.8 116.5 L784 122.4" stroke="#fff" stroke-width="1" fill="none" shape-rendering="geometricPrecision"/>
<text x="754.8" y="114.1" font-size="4.3" fill="#fff" textLength="6.6" lengthAdjust="spacingAndGlyphs" font-weight="bold" stroke="#fff" stroke-width="1.3">围檩</text>
<path d="M750 191.5 L768 191.5 L772 192.9 L779 195.9" stroke="#fff" stroke-width="1" fill="none" shape-rendering="geometricPrecision"/>
<path d="M780.5 198.3 L784.5 200.2" stroke="#fff" stroke-width="1" fill="none" shape-rendering="geometricPrecision"/>
<text x="753.5" y="189.1" font-size="4.3" fill="#fff" textLength="6.6" lengthAdjust="spacingAndGlyphs" font-weight="bold" stroke="#fff" stroke-width="1.3">围檩</text>
<path d="M750 258.5 L768 258.5 L772 259.9 L779 262.9" stroke="#fff" stroke-width="1" fill="none" shape-rendering="geometricPrecision"/>
<path d="M780.5 264.7 L784.5 266.6" stroke="#fff" stroke-width="1" fill="none" shape-rendering="geometricPrecision"/>
<text x="753.5" y="256.1" font-size="4.3" fill="#fff" textLength="6.6" lengthAdjust="spacingAndGlyphs" font-weight="bold" stroke="#fff" stroke-width="1.3">围檩</text>
<path d="M750 325.5 L768 325.5 L772 326.9 L779 329.9" stroke="#fff" stroke-width="1" fill="none" shape-rendering="geometricPrecision"/>
<path d="M780.5 331.9 L784.5 333.8" stroke="#fff" stroke-width="1" fill="none" shape-rendering="geometricPrecision"/>
<text x="753.5" y="323.1" font-size="4.3" fill="#fff" textLength="6.6" lengthAdjust="spacingAndGlyphs" font-weight="bold" stroke="#fff" stroke-width="1.3">围檩</text>
<rect x="258" y="368.2" width="529" height="3.2" fill="#fff"/>
<line x1="258" y1="370.4" x2="787" y2="370.4" stroke="#000" stroke-width="1.3" stroke-dasharray="2 1.5 1 2 3 1 1.5 2.5 1 1 2 3 1.5 1.2"/>
<line x1="258" y1="369.3" x2="787" y2="369.3" stroke="#000" stroke-width="0.9" stroke-dasharray="1 4 1.5 6 2 7 1 3 1 5"/>
<path d="M469 353.6 L423 353.6 L423 368.7" stroke="#fff" stroke-width="1" fill="none"/>
<text x="427" y="353" font-size="6.6" fill="#fff" textLength="39" lengthAdjust="spacingAndGlyphs" stroke="#fff" stroke-width="0.3">C20混凝土垫层200厚</text>
<path d="M260.5 371.2 L260.5 452.4 L280.7 452.4 L280.7 371.2" stroke="#0ff" stroke-width="1" fill="none"/>
<line x1="270.6" y1="371.2" x2="270.6" y2="452.4" stroke="#0ff" stroke-width="1"/>
<path d="M285.4 371.2 L285.4 452.4 L305.6 452.4 L305.6 371.2" stroke="#0ff" stroke-width="1" fill="none"/>
<line x1="295.5" y1="371.2" x2="295.5" y2="452.4" stroke="#0ff" stroke-width="1"/>
<path d="M310.3 371.2 L310.3 452.4 L330.5 452.4 L330.5 371.2" stroke="#0ff" stroke-width="1" fill="none"/>
<line x1="320.4" y1="371.2" x2="320.4" y2="452.4" stroke="#0ff" stroke-width="1"/>
<path d="M335.4 371.2 L335.4 452.4 L355.6 452.4 L355.6 371.2" stroke="#0ff" stroke-width="1" fill="none"/>
<line x1="345.5" y1="371.2" x2="345.5" y2="452.4" stroke="#0ff" stroke-width="1"/>
<path d="M385.3 371.2 L385.3 452.4 L405.5 452.4 L405.5 371.2" stroke="#0ff" stroke-width="1" fill="none"/>
<line x1="395.4" y1="371.2" x2="395.4" y2="452.4" stroke="#0ff" stroke-width="1"/>
<path d="M410.4 371.2 L410.4 452.4 L430.6 452.4 L430.6 371.2" stroke="#0ff" stroke-width="1" fill="none"/>
<line x1="420.5" y1="371.2" x2="420.5" y2="452.4" stroke="#0ff" stroke-width="1"/>
<path d="M435.3 371.2 L435.3 452.4 L455.5 452.4 L455.5 371.2" stroke="#0ff" stroke-width="1" fill="none"/>
<line x1="445.4" y1="371.2" x2="445.4" y2="452.4" stroke="#0ff" stroke-width="1"/>
<path d="M535.4 371.2 L535.4 452.4 L555.6 452.4 L555.6 371.2" stroke="#0ff" stroke-width="1" fill="none"/>
<line x1="545.5" y1="371.2" x2="545.5" y2="452.4" stroke="#0ff" stroke-width="1"/>
<path d="M560.6 371.2 L560.6 452.4 L580.8 452.4 L580.8 371.2" stroke="#0ff" stroke-width="1" fill="none"/>
<line x1="570.7" y1="371.2" x2="570.7" y2="452.4" stroke="#0ff" stroke-width="1"/>
<path d="M585.5 371.2 L585.5 452.4 L605.7 452.4 L605.7 371.2" stroke="#0ff" stroke-width="1" fill="none"/>
<line x1="595.6" y1="371.2" x2="595.6" y2="452.4" stroke="#0ff" stroke-width="1"/>
<path d="M660.5 371.2 L660.5 452.4 L680.7 452.4 L680.7 371.2" stroke="#0ff" stroke-width="1" fill="none"/>
<line x1="670.6" y1="371.2" x2="670.6" y2="452.4" stroke="#0ff" stroke-width="1"/>
<path d="M685.4 371.2 L685.4 452.4 L705.6 452.4 L705.6 371.2" stroke="#0ff" stroke-width="1" fill="none"/>
<line x1="695.5" y1="371.2" x2="695.5" y2="452.4" stroke="#0ff" stroke-width="1"/>
<path d="M710.3 371.2 L710.3 452.4 L730.5 452.4 L730.5 371.2" stroke="#0ff" stroke-width="1" fill="none"/>
<line x1="720.4" y1="371.2" x2="720.4" y2="452.4" stroke="#0ff" stroke-width="1"/>
<path d="M735.4 371.2 L735.4 452.4 L755.6 452.4 L755.6 371.2" stroke="#0ff" stroke-width="1" fill="none"/>
<line x1="745.5" y1="371.2" x2="745.5" y2="452.4" stroke="#0ff" stroke-width="1"/>
<path d="M760.4 371.2 L760.4 452.4 L780.6 452.4 L780.6 371.2" stroke="#0ff" stroke-width="1" fill="none"/>
<line x1="770.5" y1="371.2" x2="770.5" y2="452.4" stroke="#0ff" stroke-width="1"/>
<line x1="655.5" y1="371.2" x2="655.5" y2="452.4" stroke="#0ff" stroke-width="1"/>
<line x1="356.2" y1="371.2" x2="356.2" y2="488.5" stroke="#ff0" stroke-width="1"/>
<line x1="381.5" y1="371.2" x2="381.5" y2="488.5" stroke="#ff0" stroke-width="1"/>
<line x1="476.5" y1="371.2" x2="476.5" y2="488.5" stroke="#ff0" stroke-width="1"/>
<line x1="501.6" y1="371.2" x2="501.6" y2="488.5" stroke="#ff0" stroke-width="1"/>
<line x1="617.3" y1="371.2" x2="617.3" y2="488.5" stroke="#ff0" stroke-width="1"/>
<line x1="642.7" y1="371.2" x2="642.7" y2="488.5" stroke="#ff0" stroke-width="1"/>
<line x1="327" y1="477.6" x2="366" y2="477.6" stroke="#ff0" stroke-width="1"/>
<text x="327.8" y="477" font-size="7.4" fill="#ff0" textLength="24.4" lengthAdjust="spacingAndGlyphs" font-weight="bold" stroke="#ff0" stroke-width="0.3">Π50X钢管</text>
<line x1="447.5" y1="477.6" x2="486" y2="477.6" stroke="#ff0" stroke-width="1"/>
<text x="448.3" y="477" font-size="7.4" fill="#ff0" textLength="24.4" lengthAdjust="spacingAndGlyphs" font-weight="bold" stroke="#ff0" stroke-width="0.3">Π50X钢管</text>
<line x1="589" y1="477.6" x2="628" y2="477.6" stroke="#ff0" stroke-width="1"/>
<text x="589.8" y="477" font-size="7.4" fill="#ff0" textLength="21.5" lengthAdjust="spacingAndGlyphs" font-weight="bold" stroke="#ff0" stroke-width="0.3">Π50X钢管</text>
<line x1="368.6" y1="199" x2="368.6" y2="500.8" stroke="#f00" stroke-width="1.1" stroke-dasharray="100 9.25 1.5 9.25" stroke-dashoffset="18.2"/>
<line x1="368.6" y1="500.8" x2="368.6" y2="567.4" stroke="#0f0" stroke-width="1"/>
<line x1="488.6" y1="199" x2="488.6" y2="500.8" stroke="#f00" stroke-width="1.1" stroke-dasharray="100 9.25 1.5 9.25" stroke-dashoffset="18.2"/>
<line x1="488.6" y1="500.8" x2="488.6" y2="567.4" stroke="#0f0" stroke-width="1"/>
<line x1="630.4" y1="199" x2="630.4" y2="500.8" stroke="#f00" stroke-width="1.1" stroke-dasharray="100 9.25 1.5 9.25" stroke-dashoffset="18.2"/>
<line x1="630.4" y1="500.8" x2="630.4" y2="567.4" stroke="#0f0" stroke-width="1"/>
<line x1="269.4" y1="358" x2="269.4" y2="500.8" stroke="#f00" stroke-width="1.1" stroke-dasharray="100 9.25 1.5 9.25" stroke-dashoffset="37.5"/>
<line x1="269.4" y1="500.8" x2="269.4" y2="567.4" stroke="#0f0" stroke-width="1"/>
<line x1="775.5" y1="356" x2="775.5" y2="501.6" stroke="#f00" stroke-width="1.1" stroke-dasharray="100 9.25 1.5 9.25" stroke-dashoffset="36.5"/>
<line x1="784.2" y1="501" x2="784.2" y2="567.4" stroke="#0f0" stroke-width="1"/>
<path d="M349.1 488.5 L366 488.5 L367.5 491.6 L369.5 484.2 L371 488.5 L389.6 488.5" stroke="#ff0" stroke-width="1" fill="none" shape-rendering="geometricPrecision"/>
<path d="M469.1 488.5 L486 488.5 L487.5 491.6 L489.5 484.2 L491 488.5 L509.6 488.5" stroke="#ff0" stroke-width="1" fill="none" shape-rendering="geometricPrecision"/>
<path d="M610.9 488.5 L627.8 488.5 L629.3 491.6 L631.3 484.2 L632.8 488.5 L651.4 488.5" stroke="#ff0" stroke-width="1" fill="none" shape-rendering="geometricPrecision"/>
<rect x="510.8" y="371" width="2" height="117.5" fill="#fff"/>
<rect x="528" y="371" width="2" height="117.5" fill="#fff"/>
<rect x="510.8" y="486.6" width="19.2" height="2" fill="#fff"/>
<line x1="525" y1="476.4" x2="559" y2="476.4" stroke="#fff" stroke-width="1"/>
<text x="541" y="475.6" font-size="5.4" fill="#fff" textLength="11" lengthAdjust="spacingAndGlyphs" font-weight="bold" stroke="#fff" stroke-width="0.3">格构柱</text>
<path d="M670.5 452.4 L670.5 470.6 L721 470.6" stroke="#fff" stroke-width="1" fill="none"/>
<text x="671.5" y="470" font-size="6.6" fill="#fff" textLength="35" lengthAdjust="spacingAndGlyphs" stroke="#fff" stroke-width="0.3">Ø700 钻孔灌注桩</text>
<path d="M235 419.5 L246 419.5 L247.5 416.1 L249.5 427.1 L251 423.5 L262 423.5" stroke="#0f0" stroke-width="1" fill="none" shape-rendering="geometricPrecision"/>
<path d="M235 423.5 L246.3 423.5 L247.7 422" stroke="#0f0" stroke-width="1" fill="none" shape-rendering="geometricPrecision"/>
<path d="M249.3 421 L250.7 419.5 L262 419.5" stroke="#0f0" stroke-width="1" fill="none" shape-rendering="geometricPrecision"/>
<path d="M782 419.5 L794 419.5 L795.5 416.1 L797.5 427.1 L799 423.5 L810 423.5" stroke="#0f0" stroke-width="1" fill="none" shape-rendering="geometricPrecision"/>
<path d="M782 423.5 L794.3 423.5 L795.7 422" stroke="#0f0" stroke-width="1" fill="none" shape-rendering="geometricPrecision"/>
<path d="M797.3 421 L798.7 419.5 L810 419.5" stroke="#0f0" stroke-width="1" fill="none" shape-rendering="geometricPrecision"/>
<path d="M507 438.5 L518 438.5 L519.5 435.1 L521.5 446.1 L523 442.5 L534 442.5" stroke="#0f0" stroke-width="1" fill="none" shape-rendering="geometricPrecision"/>
<path d="M507 442.5 L518.3 442.5 L519.7 441" stroke="#0f0" stroke-width="1" fill="none" shape-rendering="geometricPrecision"/>
<path d="M521.3 440 L522.7 438.5 L534 438.5" stroke="#0f0" stroke-width="1" fill="none" shape-rendering="geometricPrecision"/>
<line x1="238.7" y1="535.3" x2="805.5" y2="535.3" stroke="#0f0" stroke-width="1"/>
<line x1="269.4" y1="552" x2="784.2" y2="552" stroke="#0f0" stroke-width="1"/>
<line x1="240.7" y1="531.5" x2="240.7" y2="539.5" stroke="#0f0" stroke-width="1"/>
<line x1="256.5" y1="531.5" x2="256.5" y2="539.5" stroke="#0f0" stroke-width="1"/>
<line x1="259" y1="531.5" x2="259" y2="539.5" stroke="#0f0" stroke-width="1"/>
<line x1="775.6" y1="531.5" x2="775.6" y2="539.5" stroke="#0f0" stroke-width="1"/>
<line x1="787" y1="531.5" x2="787" y2="539.5" stroke="#0f0" stroke-width="1"/>
<line x1="804.4" y1="531.5" x2="804.4" y2="539.5" stroke="#0f0" stroke-width="1"/>
<rect x="240.2" y="526.3" width="1" height="1" fill="#0f0"/>
<rect x="775.1" y="526.3" width="1" height="1" fill="#0f0"/>
<rect x="803.9" y="526.3" width="1" height="1" fill="#0f0"/>
<rect x="268.4" y="534.3" width="2" height="2" fill="#0f0"/>
<rect x="367.6" y="534.3" width="2" height="2" fill="#0f0"/>
<rect x="487.6" y="534.3" width="2" height="2" fill="#0f0"/>
<rect x="629.4" y="534.3" width="2" height="2" fill="#0f0"/>
<rect x="783.2" y="534.3" width="2" height="2" fill="#0f0"/>
<rect x="268.4" y="551" width="2" height="2" fill="#0f0"/>
<rect x="783.2" y="551" width="2" height="2" fill="#0f0"/>
<text x="242" y="534" font-size="7.6" fill="#fff" textLength="13" lengthAdjust="spacingAndGlyphs" stroke="#fff" stroke-width="0.3">1000</text>
<text x="259.4" y="534" font-size="7.6" fill="#fff" textLength="9.6" lengthAdjust="spacingAndGlyphs" stroke="#fff" stroke-width="0.3">600</text>
<text x="312" y="534" font-size="7.6" fill="#fff" textLength="13" lengthAdjust="spacingAndGlyphs" stroke="#fff" stroke-width="0.3">5950</text>
<text x="422" y="534" font-size="7.6" fill="#fff" textLength="13" lengthAdjust="spacingAndGlyphs" stroke="#fff" stroke-width="0.3">7200</text>
<text x="553" y="534" font-size="7.6" fill="#fff" textLength="13" lengthAdjust="spacingAndGlyphs" stroke="#fff" stroke-width="0.3">6500</text>
<text x="696" y="534" font-size="7.6" fill="#fff" textLength="13" lengthAdjust="spacingAndGlyphs" stroke="#fff" stroke-width="0.3">6700</text>
<text x="776" y="534" font-size="7.6" fill="#fff" textLength="8.6" lengthAdjust="spacingAndGlyphs" stroke="#fff" stroke-width="0.3">600</text>
<text x="790" y="534" font-size="7.6" fill="#fff" textLength="13" lengthAdjust="spacingAndGlyphs" stroke="#fff" stroke-width="0.3">1000</text>
<text x="255" y="527.2" font-size="7" fill="#fff" textLength="6.4" lengthAdjust="spacingAndGlyphs" stroke="#fff" stroke-width="0.3">50</text>
<text x="783.4" y="527.2" font-size="7" fill="#fff" textLength="6.4" lengthAdjust="spacingAndGlyphs" stroke="#fff" stroke-width="0.3">50</text>
<circle cx="269.4" cy="574.2" r="6.7" fill="none" stroke="#0f0" stroke-width="1.1"/>
<text x="269.4" y="577.9" font-size="10.8" fill="#fff" text-anchor="middle" font-family="'Liberation Serif','Noto Serif CJK SC',serif" stroke="none">E</text>
<circle cx="368.6" cy="574.2" r="6.7" fill="none" stroke="#0f0" stroke-width="1.1"/>
<text x="368.6" y="577.9" font-size="10.8" fill="#fff" text-anchor="middle" font-family="'Liberation Serif','Noto Serif CJK SC',serif" stroke="none">G</text>
<circle cx="488.6" cy="574.2" r="6.7" fill="none" stroke="#0f0" stroke-width="1.1"/>
<text x="488.6" y="577.9" font-size="10.8" fill="#fff" text-anchor="middle" font-family="'Liberation Serif','Noto Serif CJK SC',serif" stroke="none">H</text>
<circle cx="630.4" cy="574.2" r="6.7" fill="none" stroke="#0f0" stroke-width="1.1"/>
<text x="630.4" y="577.9" font-size="10.8" fill="#fff" text-anchor="middle" font-family="'Liberation Serif','Noto Serif CJK SC',serif" stroke="none">L</text>
<circle cx="784.2" cy="574.2" r="6.7" fill="none" stroke="#0f0" stroke-width="1.1"/>
<text x="784.2" y="577.9" font-size="10.8" fill="#fff" text-anchor="middle" font-family="'Liberation Serif','Noto Serif CJK SC',serif" stroke="none">M</text>
<text x="475.4" y="545.2" font-size="10.4" fill="#fff" textLength="84" lengthAdjust="spacingAndGlyphs" font-weight="bold" stroke="#fff" stroke-width="0.3">支撑布置剖面图（2-2）</text>
<rect x="473" y="547.4" width="84.5" height="1.6" fill="#fff"/>
<line x1="473" y1="550.6" x2="557.5" y2="550.6" stroke="#fff" stroke-width="1"/>
<text x="487" y="550.6" font-size="4" fill="#fff" textLength="15" lengthAdjust="spacingAndGlyphs" stroke="#fff" stroke-width="0.3">1:100</text>
</g>
<g shape-rendering="crispEdges">
<rect x="0" y="0" width="1011" height="14" fill="#f0f0f0"/>
<rect x="0" y="14" width="1011" height="1" fill="#fafafa"/>
<rect x="0" y="15" width="1011" height="1" fill="#a8a8a8"/>
<rect x="0" y="16" width="1011" height="1" fill="#eeeeee"/>
<rect x="0" y="17" width="1011" height="1" fill="#989898"/>
<rect x="0" y="18" width="1011" height="1" fill="#3c3c3c"/>
</g>
<g shape-rendering="geometricPrecision" font-family="'Liberation Sans','Noto Sans CJK SC',sans-serif">
<defs>
<linearGradient id="gpap" x1="0" y1="0" x2="1" y2="1"><stop offset="0" stop-color="#f4f9fc"/><stop offset="1" stop-color="#9fc0d6"/></linearGradient>
<linearGradient id="gor" x1="0" y1="0" x2="1" y2="1"><stop offset="0" stop-color="#ffc9a0"/><stop offset="1" stop-color="#f4691c"/></linearGradient>
<linearGradient id="ghelp" x1="0" y1="0" x2="1" y2="1"><stop offset="0" stop-color="#3f86d8"/><stop offset="1" stop-color="#0b3f8c"/></linearGradient>
<radialGradient id="glens" cx="0.4" cy="0.4" r="0.7"><stop offset="0" stop-color="#ffffff"/><stop offset="1" stop-color="#a9c6e6"/></radialGradient>
<radialGradient id="gglobe" cx="0.4" cy="0.35" r="0.8"><stop offset="0" stop-color="#53b7f2"/><stop offset="1" stop-color="#0a56a8"/></radialGradient>
</defs>
<!-- globe / web icon -->
<path d="M0 7 L7 9.5 L3.5 12.6 L0 11.4 Z" fill="#fff" stroke="#b9b9b9" stroke-width="0.6"/>
<circle cx="6.6" cy="2.2" r="6.2" fill="url(#gglobe)"/>
<path d="M2.2 -2 Q3.2 3 6.8 7.6" stroke="#e02a2a" stroke-width="1.2" fill="none"/>
<path d="M1 4.4 Q7 4.8 12.4 0.2" stroke="#f4d21c" stroke-width="1.2" fill="none"/>
<path d="M1.2 2.2 Q6 6.4 11.8 5" stroke="#59c84a" stroke-width="0.9" fill="none"/>
<!-- separators -->
<g shape-rendering="crispEdges">
<rect x="18" y="0" width="3" height="13.6" fill="#fbfbfb"/><rect x="19" y="0" width="1" height="13" fill="#1c1c1c"/>
<rect x="139" y="0" width="3" height="13.6" fill="#fbfbfb"/><rect x="140" y="0" width="1" height="13" fill="#1c1c1c"/>
<rect x="217" y="0" width="3" height="13.6" fill="#fbfbfb"/><rect x="218" y="0" width="1" height="13" fill="#1c1c1c"/>
<rect x="315" y="0" width="3" height="13.6" fill="#fbfbfb"/><rect x="316" y="0" width="1" height="13" fill="#1c1c1c"/>
<rect x="459" y="0" width="3" height="13.6" fill="#fbfbfb"/><rect x="460" y="0" width="1" height="13" fill="#1c1c1c"/>
</g>
<!-- scissors -->
<g stroke="#1a2466" fill="none">
<circle cx="39.7" cy="2.1" r="1.9" stroke-width="1.3"/><circle cx="39.5" cy="7.3" r="2" stroke-width="1.3"/>
<path d="M26 5.3 L38 3.4" stroke-width="1.3" stroke="#3e4f96"/><path d="M27.2 1.4 L38 6" stroke-width="1.1" stroke="#6a78b4"/>
</g>
<!-- copy -->
<rect x="49.6" y="-2" width="12.6" height="9.4" fill="#d9e7f3" stroke="#2c62b4" stroke-width="1.2"/>
<path d="M51.8 1 L61.4 1 L64.4 3.6 L64.4 10.4 L51.8 10.4 Z" fill="url(#gpap)" stroke="#2c62b4" stroke-width="1.3"/>
<!-- paste -->
<path d="M72.4 -1 L84.5 -1 L87 5 L82.6 8.6 L78 11.6 L75 10.6 L73.4 6 Z" fill="#e6c04a" stroke="#b98d1c" stroke-width="1"/>
<path d="M74.6 0.8 L81.2 0.8 L83.8 3 L83.8 7 L74.6 7 Z" fill="url(#gpap)" stroke="#2c62b4" stroke-width="1.1"/>
<!-- brush -->
<path d="M109.4 -0.6 L104.6 4.2" stroke="#e79a4f" stroke-width="2.4" stroke-linecap="round"/>
<path d="M105.2 3.8 L102.4 6.4" stroke="#6f7f86" stroke-width="1.8"/>
<path d="M103.4 5.2 L97 9.6 L102 9.2 L104.4 6.6 Z" fill="#151515"/>
<!-- match properties -->
<path d="M127 -1 L136 -1 L129.6 7.4 L127.6 6.2 L130.6 2.2 L126.4 1.4 Z" fill="#f6d93a" stroke="#c8a010" stroke-width="0.6"/>
<path d="M128.4 5.8 L133 0.4" stroke="#222" stroke-width="0.8"/>
<rect x="118.8" y="4.4" width="7.8" height="6" fill="url(#gor)" stroke="#1c4a9c" stroke-width="1.2"/>
<rect x="118" y="9.2" width="2.6" height="2.4" fill="#0a72e8"/>
<!-- undo -->
<path d="M155.2 -1 Q153.6 4 151.6 8" stroke="#173f7e" stroke-width="3.2" fill="none"/>
<path d="M146.8 6.2 L157.6 7.2 L151.6 11.9 Z" fill="#173f7e"/>
<path d="M171 2.2 L177.4 2.2 L174.2 5.4 Z" fill="#14146e"/>
<!-- redo -->
<path d="M189.2 -1 Q190.6 4 193 8" stroke="#c3c5c9" stroke-width="3.2" fill="none"/>
<path d="M186.8 7 L199 6 L193 12 Z" fill="#c3c5c9"/>
<path d="M207 2.2 L213.4 2.2 L210.2 5.4 Z" fill="#b9b9cc"/>
<!-- pan hand -->
<path d="M225 -1 L232.6 -1 L235 2 L237.4 5.4 L236.4 8.2 L233 9.4 L229.4 6.6 L226.4 3 Z" fill="#dd9c98" stroke="#c98784" stroke-width="0.6"/>
<path d="M233.6 8.4 L238.2 6.2 L241.2 9.6 L241 12.2 L236 12.2 Z" fill="#1f5aa6"/>
<path d="M237 -1 L237 2.2 M235.6 0.6 L238.6 0.6" stroke="#1f4c94" stroke-width="0.9"/>
<!-- magnifiers -->
<g>
<path d="M256.6 5.6 L262.8 10.2" stroke="#d98a3a" stroke-width="2.2" stroke-linecap="round"/>
<circle cx="253.2" cy="1.4" r="5.2" fill="url(#glens)" stroke="#8e9aa6" stroke-width="1.1"/>
<path d="M260.6 2 L264 2 M262.3 -1 L262.3 1" stroke="#1f4c94" stroke-width="0.9"/>
<path d="M280.4 5.2 L284.6 8.6" stroke="#d98a3a" stroke-width="2.2" stroke-linecap="round"/>
<circle cx="277" cy="1.2" r="5.2" fill="url(#glens)" stroke="#8e9aa6" stroke-width="1.1"/>
<rect x="274.6" y="-2" width="4.4" height="4.6" fill="#c8d8ea" stroke="#27509a" stroke-width="1"/>
<path d="M287.2 8 L287.2 12 L283.2 12 Z" fill="#000"/>
<path d="M303.4 5.6 L308.6 10" stroke="#d98a3a" stroke-width="2.2" stroke-linecap="round"/>
<circle cx="300" cy="1.4" r="5.2" fill="url(#glens)" stroke="#8e9aa6" stroke-width="1.1"/>
<path d="M297.6 -2 L303.6 -2 L303.6 2 L300 3.4 L297.6 2 Z" fill="#1d458c"/>
<path d="M306.6 -1 L304.6 2.6" stroke="#2f62b2" stroke-width="1"/>
</g>
<!-- properties -->
<rect x="323" y="1.8" width="5.4" height="3.2" fill="#e4dc72" stroke="#9aa04c" stroke-width="0.5"/>
<path d="M323.6 6.6 Q326 8.6 328.8 6.6 M323.6 9.2 Q326 11.2 328.8 9.2" stroke="#4c78b4" stroke-width="1.3" fill="none"/>
<path d="M328 1 L334 -1 L338 -1 L336 3.6 L331 4.6 Z" fill="#e8b0a4"/>
<path d="M338 -1 L340 -1 L339.4 3.8 L337.6 3.6 Z" fill="#2b5ca8"/>
<text x="332.6" y="11.6" font-size="9" fill="#2a3a5a">A</text>
<!-- design center -->
<rect x="346.6" y="-2" width="15" height="13" fill="#c9d9ea" stroke="#1c4a9c" stroke-width="1.4"/>
<rect x="347.4" y="-1" width="3.4" height="11.4" fill="#1c4a9c"/>
<g fill="#f0e23c"><rect x="348.4" y="1" width="1.4" height="1.4"/><rect x="348.4" y="4" width="1.4" height="1.4"/><rect x="348.4" y="7" width="1.4" height="1.4"/><rect x="357.4" y="6" width="2.6" height="2.6"/></g>
<g fill="#f6f8fa" stroke="#54759e" stroke-width="0.5"><rect x="352.6" y="0.4" width="2.8" height="2.8"/><rect x="357.2" y="0.4" width="2.8" height="2.8"/><rect x="352.6" y="5.8" width="2.8" height="2.8"/></g>
<!-- tool palettes -->
<rect x="369.4" y="-2" width="7.4" height="13" fill="#c9d9ea" stroke="#1c4a9c" stroke-width="1.3"/>
<g fill="#f6f8fa" stroke="#54759e" stroke-width="0.5"><rect x="371.6" y="2.4" width="2.6" height="2.4"/><rect x="371.6" y="6.2" width="2.6" height="2.4"/></g>
<rect x="372.2" y="6.8" width="1.4" height="1.2" fill="#e8de3a"/>
<path d="M378 -1 L382.6 3 M382.6 1 L382.6 5.6 M380.4 3.8 L382.6 6 L384.8 3.8" stroke="#173f7e" stroke-width="1.3" fill="none"/>
<rect x="381" y="7" width="3.4" height="3.4" fill="#f0e23c" stroke="#1c4a9c" stroke-width="0.8"/>
<!-- sheet set -->
<path d="M392 4 L408 1 L408 11.4 L392 11.4 Z" fill="#7da4c8"/>
<path d="M392 0.4 L404 -1 L407.4 1.6 L407.4 6 L397 8 L392 5.4 Z" fill="#dfe2e4" stroke="#b8bcc0" stroke-width="0.5"/>
<ellipse cx="405" cy="3.8" rx="2.2" ry="2.4" fill="#eef0f2" stroke="#a4a8ac" stroke-width="0.7"/>
<!-- markup -->
<rect x="416.4" y="-2" width="14.2" height="13.2" fill="#aeb4ba"/>
<rect x="415" y="-2" width="13.6" height="12" fill="#d6e4f0" stroke="#8e9aa6" stroke-width="0.5"/>
<path d="M416 -1 Q415 3 417.4 3.6 Q417.2 6.6 420.4 5.8 Q422.4 8 424.4 5.4 Q427.6 5.8 427 2.6 Q429 0.4 427 -1" fill="#f4f7fa" stroke="#e81c24" stroke-width="1.5"/>
<!-- calculator -->
<rect x="440" y="-2" width="12" height="13.6" fill="#0c0c0c"/>
<g fill="#e82020"><rect x="442" y="2.4" width="1.8" height="1.6"/><rect x="445.2" y="2.4" width="1.8" height="1.6"/><rect x="448.4" y="2.4" width="1.8" height="1.6"/></g>
<g fill="#fff"><rect x="442" y="5.4" width="1.8" height="1.8"/><rect x="445.2" y="5.4" width="1.8" height="1.8"/><rect x="448.4" y="5.4" width="1.8" height="1.8"/><rect x="442" y="8.4" width="1.8" height="1.8"/><rect x="445.2" y="8.4" width="1.8" height="1.8"/><rect x="448.4" y="8.4" width="1.8" height="1.8"/></g>
<!-- help -->
<path d="M468.2 -2 L483.2 -2 L483 8 L480.6 10.8 L469.6 10.4 Z" fill="url(#ghelp)"/>
<text x="471.4" y="9.6" font-size="13" font-weight="bold" fill="#fff">?</text>
<!-- toolbar ends / grips -->
<rect x="490" y="0" width="1" height="15" fill="#c6c6c6"/><rect x="491" y="0" width="1" height="15" fill="#fafafa"/>
<rect x="496.4" y="0" width="1" height="14" fill="#c9c9c9"/><rect x="497.4" y="0" width="1" height="14" fill="#fff"/>
<rect x="500.2" y="0" width="1" height="14" fill="#c9c9c9"/><rect x="501.2" y="0" width="1" height="14" fill="#fff"/>
<rect x="876.6" y="0" width="1" height="15" fill="#c6c6c6"/><rect x="877.6" y="0" width="1" height="15" fill="#fafafa"/>
<rect x="882.6" y="0" width="1" height="14" fill="#c9c9c9"/><rect x="883.6" y="0" width="1" height="14" fill="#fff"/>
<rect x="886" y="0" width="1" height="14" fill="#c9c9c9"/><rect x="887" y="0" width="1" height="14" fill="#fff"/>
<!-- layers icon -->
<g stroke="#55799f" stroke-width="0.6">
<path d="M508 6.6 L517 3.8 L523.4 6.6 L514.6 10.4 Z" fill="#7fa3c8"/>
<path d="M508 3.6 L517 0.8 L523.4 3.6 L514.6 7.4 Z" fill="#a4bfdb"/>
<path d="M508 0.6 L517 -2.2 L523.4 0.6 L514.6 4.4 Z" fill="#cfdeec"/>
</g>
<!-- layer combobox -->
<g shape-rendering="crispEdges"><rect x="529" y="0" width="298" height="14" fill="#fff"/><rect x="529" y="14" width="298" height="1" fill="#e6eef6"/><rect x="528" y="0" width="1" height="15" fill="#dfe7ef"/></g>
<path d="M535.6 -2 Q535.4 2 538.2 5.4 L538.4 6.4 L541.4 6.4 L541.6 5.4 Q544.4 2 544.2 -2 Z" fill="#fffbe0" stroke="#c9b23c" stroke-width="0.9"/>
<rect x="538.3" y="6.4" width="3.2" height="2.8" rx="1" fill="#7f88b8" stroke="#4a5488" stroke-width="0.5"/>
<circle cx="555.5" cy="1.6" r="6.4" fill="#f7dc42" stroke="#2a6ccc" stroke-width="0.9"/>
<rect x="548.8" y="7.8" width="1.8" height="1.8" fill="#f0cc28"/><rect x="560.6" y="7.8" width="1.8" height="1.8" fill="#f0cc28"/>
<circle cx="569.4" cy="1" r="5.4" fill="#88a8d4"/><circle cx="569.4" cy="1" r="3" fill="#e2c456" stroke="#c8a838" stroke-width="0.8"/>
<rect x="571" y="1.6" width="8" height="7.6" fill="#f4f8fc" stroke="#6f94c8" stroke-width="1"/>
<path d="M583.4 -1 L583.4 2.6 M586 -1 L586 1.6" stroke="#b49a1c" stroke-width="1.4"/>
<rect x="587.6" y="-1" width="8.6" height="10.4" rx="1.2" fill="#e8e04a" stroke="#a8a020" stroke-width="0.9"/>
<path d="M589 3.4 L595 3.4 M589 6 L595 6" stroke="#b8b028" stroke-width="0.8"/>
<rect x="599.4" y="-2" width="9.2" height="10.4" fill="#fff" stroke="#000" stroke-width="1.2"/>
<text x="613.6" y="7.6" font-size="10.6" fill="#000">0</text>
<path d="M816 3 L823.4 3 L819.7 7 Z" fill="#000"/>
<!-- layer state icons -->
<g stroke="#7a98bc" stroke-width="0.5">
<path d="M832 0.4 L840 -2.4 L847 0.4 L839 3.6 Z" fill="#c7d8ea"/>
<path d="M832 5 L840 2.2 L847 5 L839 8.4 Z" fill="#f0d83a" stroke="#b8a020"/>
</g>
<path d="M830.4 10.4 L834 6.8 M831.6 6.6 L834.2 6.6 L834.2 9.2" stroke="#173f7e" stroke-width="1.1" fill="none"/>
<g stroke="#7a98bc" stroke-width="0.5">
<path d="M854 5.6 L862.6 2.8 L870 5.6 L861.6 9.6 Z" fill="#a9c3dd"/>
<path d="M854 2.6 L862.6 -0.2 L870 2.6 L861.6 6.6 Z" fill="#c7d8ea"/>
<path d="M854 -0.4 L862.6 -3.2 L870 -0.4 L861.6 3.6 Z" fill="#dce8f3"/>
</g>
<path d="M861.4 -2 L861.4 2.4 M859 0.6 L861.4 3.2 L863.8 0.6" stroke="#173f7e" stroke-width="1.4" fill="none"/>
<!-- text style icon -->
<text x="893.4" y="9.2" font-size="14.5" fill="#111">A</text>
<path d="M910.6 1.6 L906.6 5.4" stroke="#e79a4f" stroke-width="2" stroke-linecap="round"/>
<path d="M906.8 5 L900.4 10.4 L905 9.6 L907.8 6.2 Z" fill="#151515"/>
<!-- text style combobox -->
<g shape-rendering="crispEdges"><rect x="916" y="0" width="95" height="14" fill="#fff"/><rect x="916" y="14" width="95" height="1" fill="#e6eef6"/><rect x="915" y="0" width="1" height="15" fill="#dfe7ef"/></g>
<text x="919.6" y="7.8" font-size="12" fill="#000" textLength="47.6" lengthAdjust="spacingAndGlyphs">说明文字</text>
<path d="M1003 3 L1010.4 3 L1006.7 7 Z" fill="#000"/>
</g>

</svg>
</body></html>
